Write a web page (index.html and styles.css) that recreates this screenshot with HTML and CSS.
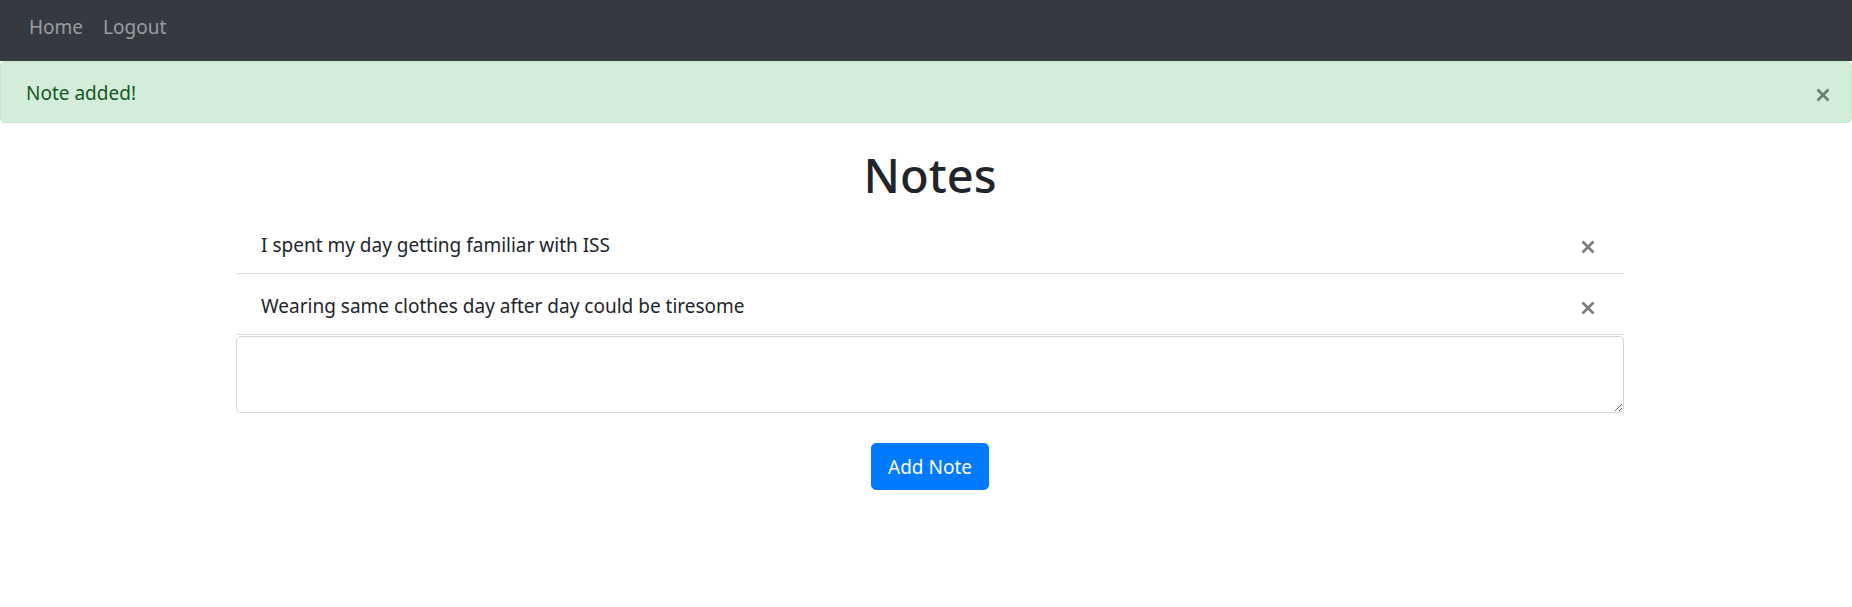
FILE: index.html
```html
<!DOCTYPE html>
<html lang="en">
<head>
<meta charset="utf-8">
<title>Notes</title>
<link rel="stylesheet" href="styles.css">
</head>
<body>
<nav class="navbar">
  <a class="nav-link" href="#">Home</a>
  <a class="nav-link" href="#">Logout</a>
</nav>
<div class="alert">
  <span class="alert-text">Note added!</span>
  <button class="close close-alert" type="button" aria-label="Close">
    <svg width="14" height="14" viewBox="0 0 14 14"><path d="M1.5 1.5L12.5 12.5M12.5 1.5L1.5 12.5" stroke="currentColor" stroke-width="2.6" stroke-linecap="butt"/></svg>
  </button>
</div>
<main class="container">
  <h1 class="title">Notes</h1>
  <ul class="note-list">
    <li class="note-item">
      <span class="note-text">I spent my day getting familiar with ISS</span>
      <button class="close close-note" type="button" aria-label="Delete">
        <svg width="14" height="14" viewBox="0 0 14 14"><path d="M1.5 1.5L12.5 12.5M12.5 1.5L1.5 12.5" stroke="currentColor" stroke-width="2.6" stroke-linecap="butt"/></svg>
      </button>
    </li>
    <li class="note-item">
      <span class="note-text">Wearing same clothes day after day could be tiresome</span>
      <button class="close close-note" type="button" aria-label="Delete">
        <svg width="14" height="14" viewBox="0 0 14 14"><path d="M1.5 1.5L12.5 12.5M12.5 1.5L1.5 12.5" stroke="currentColor" stroke-width="2.6" stroke-linecap="butt"/></svg>
      </button>
    </li>
  </ul>
  <form class="note-form">
    <textarea class="note-input" rows="2"></textarea>
    <div class="form-actions">
      <button class="btn-primary" type="button">Add Note</button>
    </div>
  </form>
</main>
</body>
</html>
```
FILE: styles.css
```css
* { box-sizing: border-box; }
html, body { margin: 0; padding: 0; }
body {
  font-family: "Noto Sans", "Open Sans", sans-serif;
  font-size: 19px;
  line-height: 30px;
  color: #212529;
  background: #fff;
}
.navbar {
  height: 61px;
  background: #343a40;
  display: flex;
  align-items: flex-start;
  padding: 12px 20px 0 19px;
}
.nav-link {
  color: rgba(255,255,255,.5);
  text-decoration: none;
  padding: 0 10px;
  line-height: 30px;
}
.alert {
  height: 62px;
  background: #d4edda;
  border: 1px solid #c3e6cb;
  border-radius: 5px;
  color: #155724;
  display: flex;
  align-items: center;
  justify-content: space-between;
  padding: 1px 21px 0 25px;
  margin-bottom: 20px;
}
.close {
  border: 0;
  background: transparent;
  padding: 0;
  display: flex;
  cursor: pointer;
}
.close-alert { color: #6c7e70; margin-top: 5px; }
.container {
  width: 1388px;
  margin-left: calc(50% - 690px);
}
.title {
  margin: 0 0 8px;
  padding-top: 2px;
  font-size: 47px;
  line-height: 60px;
  font-weight: 500;
  text-align: center;
}
.note-list {
  list-style: none;
  margin: 0;
  padding: 0;
}
.note-item {
  display: flex;
  align-items: center;
  justify-content: space-between;
  height: 61px;
  padding: 4px 29px 0 25px;
  border-bottom: 1px solid #dfdfdf;
}
.close-note { color: #7d7d7d; margin-top: 4px; }
.note-form { margin: 1px 0 0; }
.note-input {
  display: block;
  width: 100%;
  height: 77px;
  border: 1px solid #ced4da;
  border-radius: 5px;
  padding: 7px 15px;
  font: inherit;
  color: #495057;
  resize: vertical;
}
.form-actions {
  display: flex;
  justify-content: center;
  padding-top: 30px;
}
.btn-primary {
  height: 47px;
  padding: 0 16px;
  background: #007bff;
  border: 1px solid #007bff;
  border-radius: 5px;
  color: #fff;
  font: inherit;
  cursor: pointer;
}
```
